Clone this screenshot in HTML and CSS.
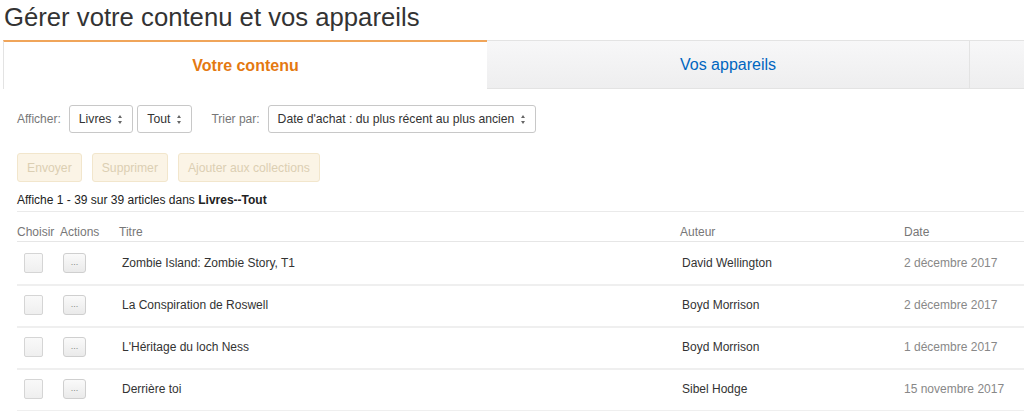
FILE: index.html
```html
<!DOCTYPE html>
<html lang="fr">
<head>
  <meta charset="UTF-8">
  <title>Gérer votre contenu et vos appareils</title>
  <link rel="stylesheet" href="styles.css">
</head>
<body>

  <!-- Page title -->
  <h1 class="page-title">Gérer votre contenu et vos appareils</h1>

  <!-- Tabs -->
  <div class="tabs">
    <div class="tab tab-active">Votre contenu</div>
    <div class="tab">Vos appareils</div>
    <div class="tab tab-rest"></div>
  </div>

  <div class="content">
    <!-- Filters -->
    <div class="filters">
      <span class="filter-label">Afficher:</span>
      <div class="select">Livres <span class="arrows"></span></div>
      <div class="select">Tout <span class="arrows"></span></div>
      <span class="filter-label sort-label">Trier par:</span>
      <div class="select">Date d'achat : du plus récent au plus ancien <span class="arrows"></span></div>
    </div>

    <!-- Bulk actions (disabled) -->
    <div class="bulk-actions">
      <button class="btn-disabled" disabled>Envoyer</button>
      <button class="btn-disabled" disabled>Supprimer</button>
      <button class="btn-disabled" disabled>Ajouter aux collections</button>
    </div>

    <p class="count">Affiche 1 - 39 sur 39 articles dans <b>Livres--Tout</b></p>

    <!-- Content list -->
    <div class="list">
      <div class="row row-head">
        <div class="cell cell-choose">Choisir</div>
        <div class="cell cell-actions">Actions</div>
        <div class="cell cell-title">Titre</div>
        <div class="cell cell-author">Auteur</div>
        <div class="cell cell-date">Date</div>
      </div>

      <div class="row">
        <div class="cell cell-choose"><span class="checkbox"></span></div>
        <div class="cell cell-actions"><span class="dots">...</span></div>
        <div class="cell cell-title">Zombie Island: Zombie Story, T1</div>
        <div class="cell cell-author">David Wellington</div>
        <div class="cell cell-date">2 décembre 2017</div>
      </div>

      <div class="row">
        <div class="cell cell-choose"><span class="checkbox"></span></div>
        <div class="cell cell-actions"><span class="dots">...</span></div>
        <div class="cell cell-title">La Conspiration de Roswell</div>
        <div class="cell cell-author">Boyd Morrison</div>
        <div class="cell cell-date">2 décembre 2017</div>
      </div>

      <div class="row">
        <div class="cell cell-choose"><span class="checkbox"></span></div>
        <div class="cell cell-actions"><span class="dots">...</span></div>
        <div class="cell cell-title">L'Héritage du loch Ness</div>
        <div class="cell cell-author">Boyd Morrison</div>
        <div class="cell cell-date">1 décembre 2017</div>
      </div>

      <div class="row">
        <div class="cell cell-choose"><span class="checkbox"></span></div>
        <div class="cell cell-actions"><span class="dots">...</span></div>
        <div class="cell cell-title">Derrière toi</div>
        <div class="cell cell-author">Sibel Hodge</div>
        <div class="cell cell-date">15 novembre 2017</div>
      </div>
    </div>
  </div>

</body>
</html>
```

FILE: styles.css
```css
/* General body and text styling */
body {
  margin: 0;
  padding: 0;
  background: #fff;
  color: #333;
  font-family: "Liberation Sans", Arial, sans-serif;
  font-size: 12px;
  overflow: hidden;
}

.page-title {
  margin: 0;
  padding: 2px 0 0 4px;
  height: 38px;
  font-size: 25.7px;
  font-weight: normal;
  line-height: 30px;
  color: #333;
}

/* Tabs */
.tabs {
  display: flex;
  margin-left: 3px;
  height: 49px;
}

.tab {
  width: 483px;
  box-sizing: border-box;
  display: flex;
  justify-content: center;
  align-items: center;
  font-size: 16px;
  color: #0066c0;
  background: linear-gradient(#f7f7f8, #eeeeef);
  border-top: 1px solid #e3e3e3;
  border-bottom: 1px solid #e3e3e3;
  border-right: 1px solid #e3e3e3;
}

.tab-active {
  width: 484px;
  background: #fff;
  border-top: 2px solid #f0a55a;
  border-left: 1px solid #e3e3e3;
  border-bottom: none;
  border-right: none;
  color: #e47911;
  font-weight: bold;
}

.tab-rest {
  flex: 1;
  border-right: none;
}

/* Content area */
.content {
  padding: 16px 0 0 17px;
}

.filters {
  display: flex;
  align-items: center;
  height: 28px;
}

.filter-label {
  color: #777;
  font-size: 12px;
  margin-right: 8px;
}

.sort-label {
  margin-left: 15px;
}

.select {
  display: flex;
  align-items: center;
  box-sizing: border-box;
  height: 28px;
  padding: 0 9px;
  margin-right: 4px;
  border: 1px solid #c8c8c8;
  border-radius: 3px;
  font-size: 12.2px;
  color: #333;
  background: #fff;
}

.arrows {
  display: inline-block;
  width: 5px;
  height: 9px;
  margin-left: 7px;
  position: relative;
}

.arrows::before,
.arrows::after {
  content: "";
  position: absolute;
  left: 0;
  border-left: 2.5px solid transparent;
  border-right: 2.5px solid transparent;
}

.arrows::before {
  top: 0;
  border-bottom: 3px solid #666;
}

.arrows::after {
  bottom: 0;
  border-top: 3px solid #666;
}

/* Disabled bulk buttons */
.bulk-actions {
  display: flex;
  gap: 10px;
  margin-top: 20px;
}

.btn-disabled {
  height: 29px;
  padding: 0 9px;
  font-family: inherit;
  font-size: 12.2px;
  color: #dbcfb3;
  background: #fbf4e6;
  border: 1px solid #f2e6cc;
  border-radius: 3px;
}

.count {
  margin: 11px 0 0;
  font-size: 12px;
  line-height: 14px;
  color: #222;
}

/* List */
.list {
  margin-top: 4px;
  border-top: 1px solid #eaeaea;
}

.row {
  display: grid;
  grid-template-columns: 43px 58px 561px 225px 1fr;
  align-items: center;
  height: 42px;
  box-sizing: border-box;
  padding-bottom: 3px;
  border-bottom: 2px solid #efefef;
  color: #333;
}

.row-head {
  height: 30px;
  padding: 11px 0 0;
  margin-bottom: 2px;
  border-bottom: 1px solid #e6e6e6;
  color: #777;
}

.row .cell-title {
  padding-left: 4px;
}

.row .cell-author {
  padding-left: 3px;
}

.row-head .cell-title,
.row-head .cell-author {
  padding-left: 1px;
}

.cell-date {
  color: #888;
}

.row-head .cell-date {
  color: #777;
}

.checkbox {
  display: block;
  width: 17px;
  height: 18px;
  margin-left: 7px;
  border: 1px solid #d5d5d5;
  border-radius: 2px;
  background: linear-gradient(#f9f9f9, #efefef);
}

.dots {
  display: flex;
  justify-content: center;
  align-items: flex-end;
  box-sizing: border-box;
  width: 23px;
  height: 20px;
  margin-left: 3px;
  padding-bottom: 5px;
  border: 1px solid #cfcfcf;
  border-radius: 3px;
  background: linear-gradient(#fafafa, #eaeaea);
  color: #888;
  font-size: 9px;
  line-height: 9px;
}
```
